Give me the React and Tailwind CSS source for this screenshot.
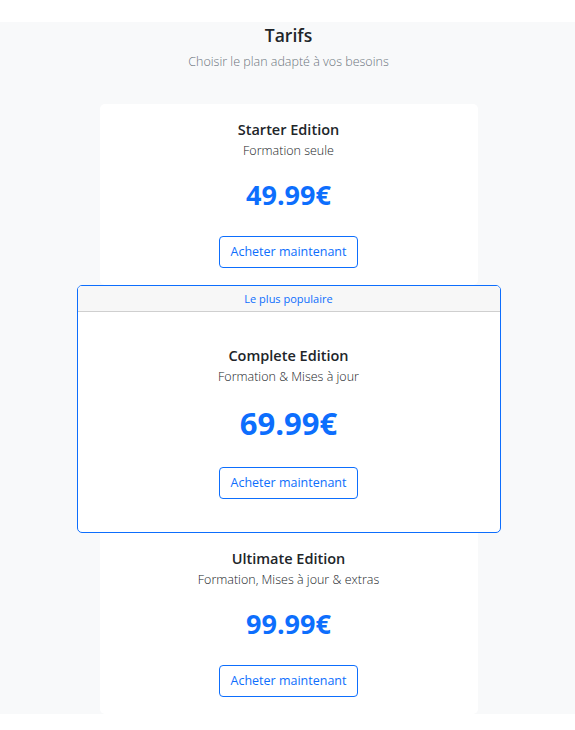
const plans = [
  { name: "Starter Edition", desc: "Formation seule", price: "49.99€" },
  { name: "Complete Edition", desc: "Formation & Mises à jour", price: "69.99€", popular: true },
  { name: "Ultimate Edition", desc: "Formation, Mises à jour & extras", price: "99.99€" },
];

function BuyButton() {
  return (
    <button className="h-[32px] w-[139px] rounded-[4px] border border-[#0d6efd] bg-white text-[12.5px] font-normal text-[#0d6efd]">
      Acheter maintenant
    </button>
  );
}

function PlanBody({ plan, big }) {
  return (
    <div className="flex flex-col items-center">
      <h3 className="text-[14.5px] leading-[20px] font-semibold text-[#212529]">{plan.name}</h3>
      <p className="mt-[2px] text-[12.5px] leading-[18px] font-light text-[#212529]">{plan.desc}</p>
      {big ? (
        <p className="mt-[17px] text-[31px] leading-[40px] font-bold text-[#0d6efd]">{plan.price}</p>
      ) : (
        <p className="mt-[17px] text-[27px] leading-[36px] font-bold text-[#0d6efd]">{plan.price}</p>
      )}
      <div className={big ? "mt-[24px]" : "mt-[23px]"}>
        <BuyButton />
      </div>
    </div>
  );
}

export default function App() {
  return (
    <div className="min-h-screen bg-white pt-[22px] font-['Open_Sans',sans-serif]">
      <section className="bg-[#f8f9fa] pt-[1px] pl-[2px]">
        <div className="flex flex-col items-center">
          <h1 className="text-[17.5px] leading-[24px] font-semibold text-[#212529]">Tarifs</h1>
          <p className="mt-[6px] text-[12.5px] leading-[18px] font-light text-[#6c757d]">
            Choisir le plan adapté à vos besoins
          </p>
        </div>

        <div className="mt-[33px] flex flex-col items-center">
          <div className="w-[378px] rounded-[5px] bg-white pt-[16px] pb-[17px]">
            <PlanBody plan={plans[0]} />
          </div>

          <div className="w-[424px] overflow-hidden rounded-[5px] border border-[#0d6efd] bg-white">
            <div className="h-[26px] border-b border-[#cfcfcf] bg-[#f7f7f7] text-center text-[11px] leading-[26px] text-[#0d6efd]">
              Le plus populaire
            </div>
            <div className="pt-[34px] pb-[33px]">
              <PlanBody plan={plans[1]} big />
            </div>
          </div>

          <div className="w-[378px] rounded-b-[5px] bg-white pt-[16px] pb-[17px]">
            <PlanBody plan={plans[2]} />
          </div>
        </div>
      </section>
    </div>
  );
}
